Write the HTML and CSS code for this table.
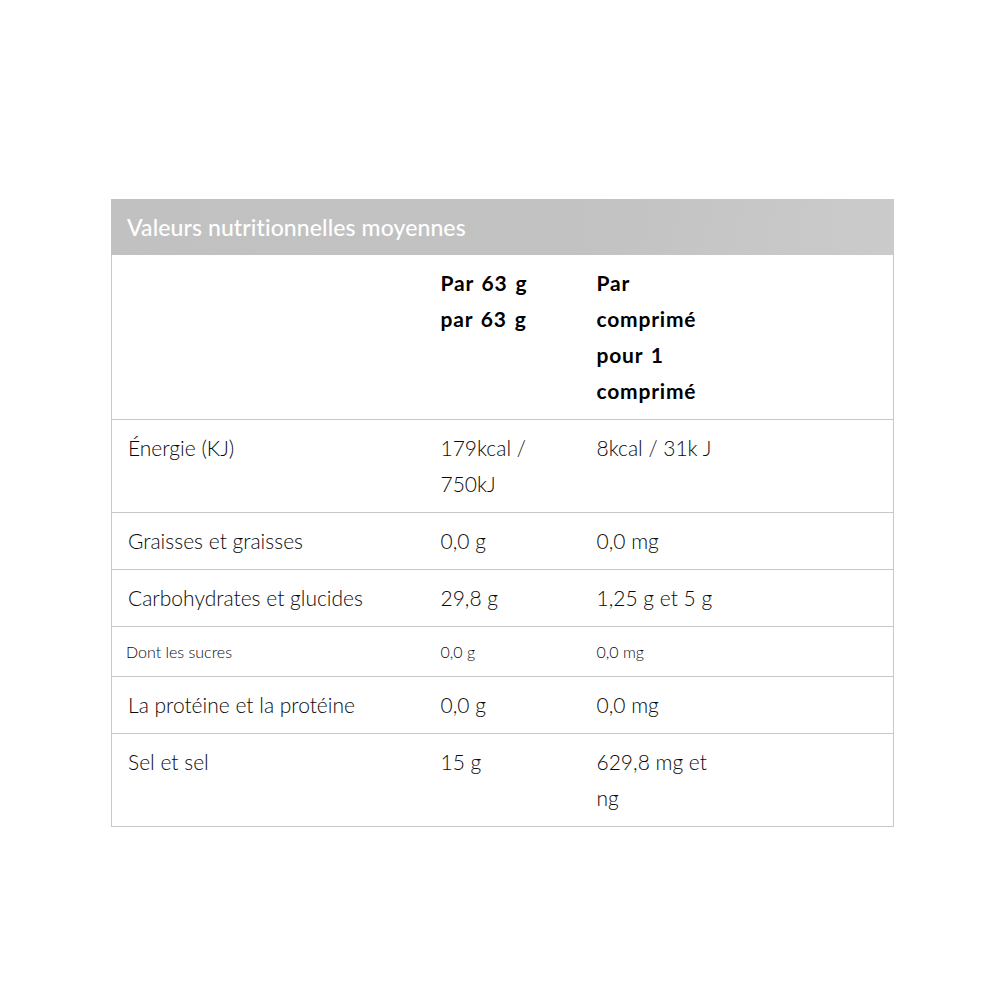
FILE: index.html
```html
<!DOCTYPE html>
<html lang="fr">
<head>
<meta charset="utf-8">
<title>Valeurs nutritionnelles</title>
<link rel="stylesheet" href="styles.css">
</head>
<body>
<main class="page">
  <section class="nutrition">
    <h2 class="nutrition-title">Valeurs nutritionnelles moyennes</h2>
    <table class="nutrition-table">
      <colgroup>
        <col class="c1"><col class="c2"><col class="c3"><col class="c4">
      </colgroup>
      <thead>
        <tr>
          <th></th>
          <th class="v2">Par 63 g par 63 g</th>
          <th class="v3">Par comprimé pour 1 comprimé</th>
          <th></th>
        </tr>
      </thead>
      <tbody>
        <tr>
          <td>Énergie (KJ)</td>
          <td class="v2">179kcal / 750kJ</td>
          <td class="v3">8kcal / 31k J</td>
          <td></td>
        </tr>
        <tr>
          <td>Graisses et graisses</td>
          <td class="v2">0,0 g</td>
          <td class="v3">0,0 mg</td>
          <td></td>
        </tr>
        <tr>
          <td>Carbohydrates et glucides</td>
          <td class="v2">29,8 g</td>
          <td class="v3">1,25 g et 5 g</td>
          <td></td>
        </tr>
        <tr class="small">
          <td class="sub">Dont les sucres</td>
          <td class="v2">0,0 g</td>
          <td class="v3">0,0 mg</td>
          <td></td>
        </tr>
        <tr>
          <td>La protéine et la protéine</td>
          <td class="v2">0,0 g</td>
          <td class="v3">0,0 mg</td>
          <td></td>
        </tr>
        <tr>
          <td>Sel et sel</td>
          <td class="v2">15 g</td>
          <td class="v3">629,8 mg et ng</td>
          <td></td>
        </tr>
      </tbody>
    </table>
  </section>
</main>
</body>
</html>
```
FILE: styles.css
```css
html, body {
  margin: 0;
  padding: 0;
  background: #fff;
}
.page {
  padding: 199px 0 0 111px;
  font-family: "Lato", "Liberation Sans", sans-serif;
  color: #111;
}
.nutrition {
  width: 783px;
}
.nutrition-title {
  margin: 0;
  height: 56px;
  box-sizing: border-box;
  padding: 14px 16px 0;
  background: linear-gradient(100deg, #c1c1c1 0%, #c2c2c2 60%, #cbcbcb 100%);
  color: #fff;
  font-size: 23px;
  font-weight: 500;
  line-height: 28px;
  letter-spacing: 0.1px;
}
.nutrition-table {
  width: 783px;
  border-collapse: collapse;
  table-layout: fixed;
  border: 1px solid #c8c8c8;
  border-top: none;
}
.c1 { width: 313px; }
.c2 { width: 156px; }
.c3 { width: 156px; }
.nutrition-table th,
.nutrition-table td {
  padding: 10px 16px;
  text-align: left;
  vertical-align: top;
  font-size: 21px;
  line-height: 36px;
  border-bottom: 1px solid #c8c8c8;
}
.nutrition-table th {
  font-weight: 700;
  color: #000;
  letter-spacing: 0.8px;
  word-spacing: 2px;
}
.nutrition-table td {
  font-weight: 300;
  color: #0a0a0a;
}
.nutrition-table .v2 {
  padding-right: 40px;
}
.nutrition-table .v3 {
  padding-right: 14px;
}
.nutrition-table tr.small td {
  font-size: 16px;
  line-height: 29px;
}
.nutrition-table td.sub {
  padding-left: 14px;
}
```
